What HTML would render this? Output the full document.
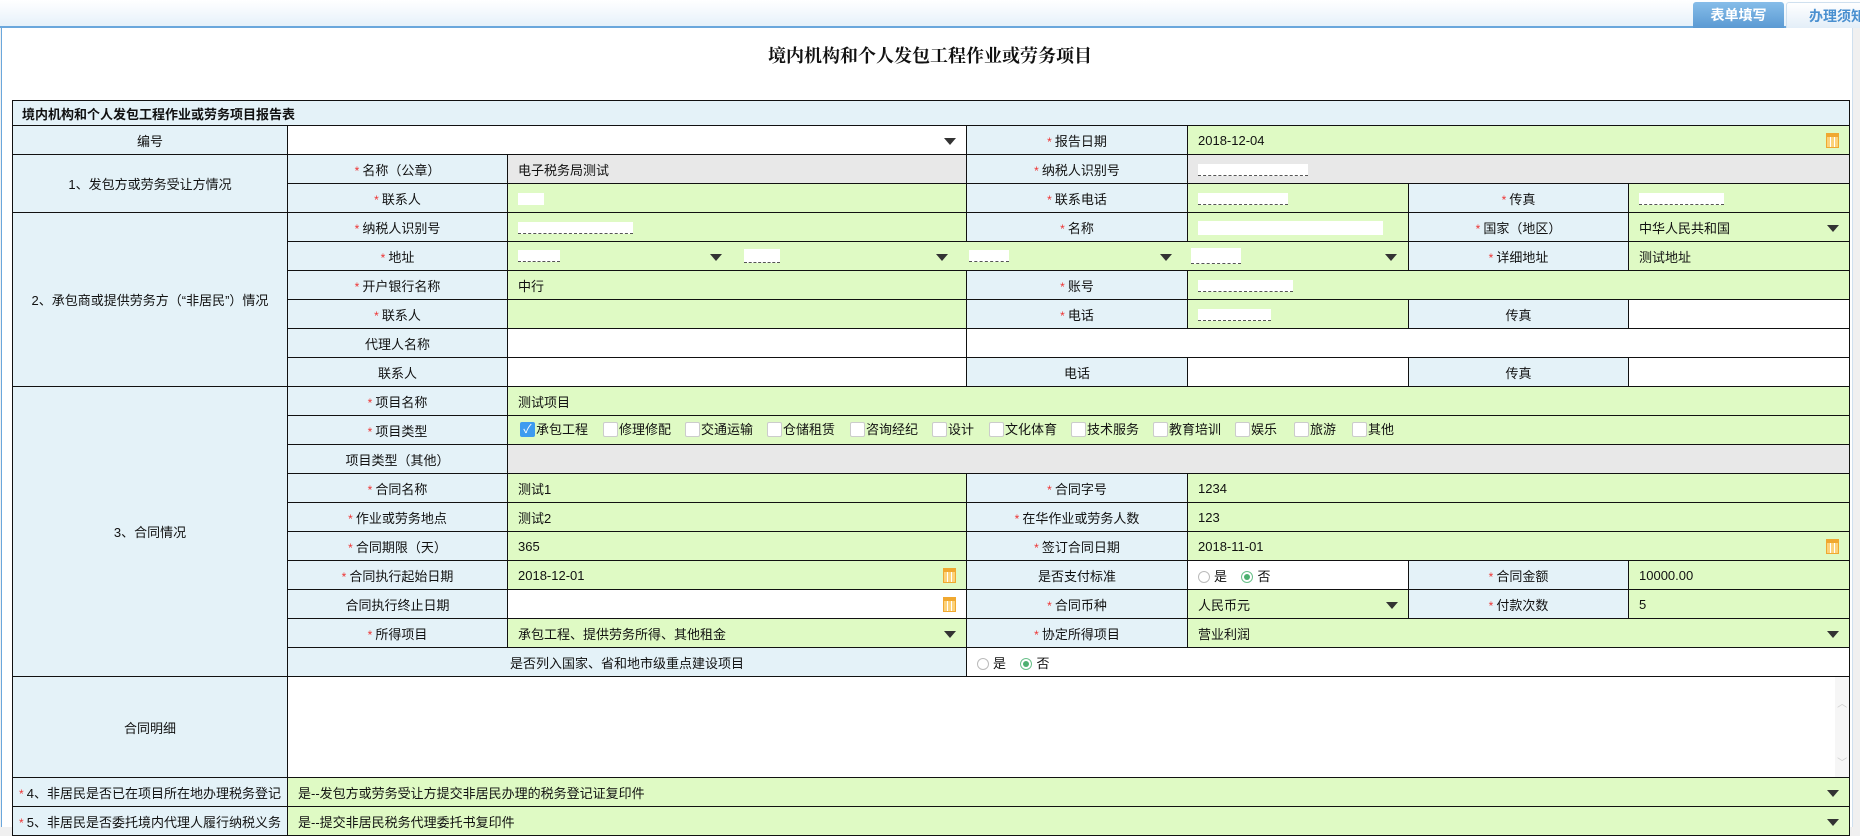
<!DOCTYPE html>
<html><head><meta charset="utf-8">
<style>
*{box-sizing:border-box;margin:0;padding:0}
body{width:1860px;height:830px;background:#f0f0f0;font-family:"Liberation Sans","Noto Sans CJK SC",sans-serif;font-size:13px;color:#111;position:relative;overflow:hidden}
.top{position:absolute;left:0;top:0;width:1860px;height:28px;background:linear-gradient(#fff,#e6f1fa);border-bottom:2px solid #6aa7dc}
.tab1{position:absolute;left:1693px;top:2px;width:91px;height:26px;background:linear-gradient(#86bde9,#5b9ad3);color:#fff;font-weight:bold;font-size:14px;text-align:center;line-height:26px;border-radius:3px 3px 0 0}
.tab2{position:absolute;left:1786px;top:2px;width:80px;height:26px;background:linear-gradient(#fff,#e3eef8);color:#4a90d0;font-weight:bold;font-size:14px;line-height:26px;padding-left:22px;border:1px solid #cfe0ef;border-bottom:none;border-radius:3px 3px 0 0;white-space:nowrap}
.main{position:absolute;left:1px;top:28px;width:1852px;height:799px;background:#fff;border-left:1px solid #6aa7dc;border-right:1px solid #cfe0ef}
.title{position:absolute;left:0;width:1860px;top:42px;text-align:center;font-family:"Liberation Serif","Noto Serif CJK SC",serif;font-weight:bold;font-size:18px}
table{position:absolute;left:12px;top:100px;border-collapse:collapse;table-layout:fixed;width:1837px}
td{border:1px solid #111;height:29px;padding:0 10px;white-space:nowrap;overflow:hidden;position:relative}
.l{background:#e4f2f8;text-align:center;padding:0}
.g{background:#dffac4}
.gr{background:#e8e8e8}
.w{background:#fff}
.s{color:#e33;font-size:12px;margin-right:3px}
.arr{position:absolute;right:10px;top:12px;width:0;height:0;border-left:6px solid transparent;border-right:6px solid transparent;border-top:7px solid #333}
.cal{position:absolute;right:10px;top:7px;width:13px;height:15px;border:1px solid #f0a830;background:repeating-linear-gradient(90deg,#fcd27a 0 3px,#fff 3px 4px);}
.cal:before{content:"";position:absolute;left:0;right:0;top:0;height:3px;background:#f0a830}
.red{display:inline-block;background:#fff;height:12px;vertical-align:middle;border-bottom:1px dashed #555}
.cb{position:absolute;top:6px;width:15px;height:15px;border:1px solid #ccc;background:#fff;border-radius:2px}
.cb.on{background:#3d9bf0;border-color:#3d9bf0;color:#fff;font-size:12px;line-height:13px;text-align:center}
.ct{position:absolute;top:6px;line-height:16px}
.rd{display:inline-block;width:12px;height:12px;border:1px solid #bbb;border-radius:50%;vertical-align:-2px;margin-right:4px;position:relative}
.rd.on{border-color:#6ac08a}
.rd.on:after{content:"";position:absolute;left:2px;top:2px;width:6px;height:6px;border-radius:50%;background:#4cb070}
.sb{position:absolute;right:0;top:0;width:14px;height:100%;background:#f6f6f6;color:#ccc;font-size:10px;text-align:center}
</style></head><body>
<div class="top"><div class="tab1">表单填写</div><div class="tab2">办理须知</div></div>
<div class="main"></div>
<div class="title">境内机构和个人发包工程作业或劳务项目</div>
<table>
<colgroup><col style="width:275px"><col style="width:220px"><col style="width:459px"><col style="width:221px"><col style="width:221px"><col style="width:220px"><col style="width:221px"></colgroup>
<tr><td colspan="7" class="l" style="height:25px;text-align:left;padding-left:9px;font-weight:bold">境内机构和个人发包工程作业或劳务项目报告表</td></tr>
<tr><td class="l">编号</td><td colspan="2" class="w"><span class="arr"></span></td><td class="l"><span class="s">*</span>报告日期</td><td colspan="3" class="g">2018-12-04<span class="cal"></span></td></tr>
<tr><td rowspan="2" class="l">1、发包方或劳务受让方情况</td><td class="l"><span class="s">*</span>名称（公章）</td><td class="gr">电子税务局测试</td><td class="l"><span class="s">*</span>纳税人识别号</td><td colspan="3" class="gr"><span class="red" style="width:110px"></span></td></tr>
<tr><td class="l"><span class="s">*</span>联系人</td><td class="g"><span class="red" style="width:26px;border:none"></span></td><td class="l"><span class="s">*</span>联系电话</td><td class="g"><span class="red" style="width:90px"></span></td><td class="l"><span class="s">*</span>传真</td><td class="g"><span class="red" style="width:85px"></span></td></tr>
<tr><td rowspan="6" class="l">2、承包商或提供劳务方（“非居民”）情况</td><td class="l"><span class="s">*</span>纳税人识别号</td><td class="g"><span class="red" style="width:115px"></span></td><td class="l"><span class="s">*</span>名称</td><td class="g"><span class="red" style="width:185px;border:none;height:14px"></span></td><td class="l"><span class="s">*</span>国家（地区）</td><td class="g">中华人民共和国<span class="arr"></span></td></tr>
<tr><td class="l"><span class="s">*</span>地址</td><td colspan="3" class="g" style="padding:0"><div style="position:relative;height:28px">
<span class="red" style="position:absolute;left:10px;top:8px;width:42px"></span><span class="arr" style="right:auto;left:202px"></span>
<span class="red" style="position:absolute;left:236px;top:7px;width:36px;height:14px"></span><span class="arr" style="right:auto;left:428px"></span>
<span class="red" style="position:absolute;left:461px;top:8px;width:40px"></span><span class="arr" style="right:auto;left:652px"></span>
<span class="red" style="position:absolute;left:683px;top:6px;width:50px;height:16px"></span><span class="arr" style="right:auto;left:877px"></span></div></td>
<td class="l"><span class="s">*</span>详细地址</td><td class="g">测试地址</td></tr>
<tr><td class="l"><span class="s">*</span>开户银行名称</td><td class="g">中行</td><td class="l"><span class="s">*</span>账号</td><td colspan="3" class="g"><span class="red" style="width:95px"></span></td></tr>
<tr><td class="l"><span class="s">*</span>联系人</td><td class="g"></td><td class="l"><span class="s">*</span>电话</td><td class="g"><span class="red" style="width:73px"></span></td><td class="l">传真</td><td class="w"></td></tr>
<tr><td class="l">代理人名称</td><td class="w"></td><td colspan="4" class="w"></td></tr>
<tr><td class="l">联系人</td><td class="w"></td><td class="l">电话</td><td class="w"></td><td class="l">传真</td><td class="w"></td></tr>
<tr><td rowspan="10" class="l">3、合同情况</td><td class="l"><span class="s">*</span>项目名称</td><td colspan="5" class="g">测试项目</td></tr>
<tr><td class="l"><span class="s">*</span>项目类型</td><td colspan="5" class="g" style="padding:0"><div style="position:relative;height:28px">
<span class="cb on" style="left:12px">✓</span><span class="ct" style="left:28px">承包工程</span>
<span class="cb" style="left:95px"></span><span class="ct" style="left:111px">修理修配</span>
<span class="cb" style="left:177px"></span><span class="ct" style="left:193px">交通运输</span>
<span class="cb" style="left:259px"></span><span class="ct" style="left:275px">仓储租赁</span>
<span class="cb" style="left:342px"></span><span class="ct" style="left:358px">咨询经纪</span>
<span class="cb" style="left:424px"></span><span class="ct" style="left:440px">设计</span>
<span class="cb" style="left:481px"></span><span class="ct" style="left:497px">文化体育</span>
<span class="cb" style="left:563px"></span><span class="ct" style="left:579px">技术服务</span>
<span class="cb" style="left:645px"></span><span class="ct" style="left:661px">教育培训</span>
<span class="cb" style="left:727px"></span><span class="ct" style="left:743px">娱乐</span>
<span class="cb" style="left:786px"></span><span class="ct" style="left:802px">旅游</span>
<span class="cb" style="left:844px"></span><span class="ct" style="left:860px">其他</span></div></td></tr>
<tr><td class="l">项目类型（其他）</td><td colspan="5" class="gr"></td></tr>
<tr><td class="l"><span class="s">*</span>合同名称</td><td class="g">测试1</td><td class="l"><span class="s">*</span>合同字号</td><td colspan="3" class="g">1234</td></tr>
<tr><td class="l"><span class="s">*</span>作业或劳务地点</td><td class="g">测试2</td><td class="l"><span class="s">*</span>在华作业或劳务人数</td><td colspan="3" class="g">123</td></tr>
<tr><td class="l"><span class="s">*</span>合同期限（天）</td><td class="g">365</td><td class="l"><span class="s">*</span>签订合同日期</td><td colspan="3" class="g">2018-11-01<span class="cal"></span></td></tr>
<tr><td class="l"><span class="s">*</span>合同执行起始日期</td><td class="g">2018-12-01<span class="cal"></span></td><td class="l">是否支付标准</td><td class="w"><span class="rd"></span>是 &nbsp; &nbsp;<span class="rd on"></span>否</td><td class="l"><span class="s">*</span>合同金额</td><td class="g">10000.00</td></tr>
<tr><td class="l">合同执行终止日期</td><td class="w"><span class="cal"></span></td><td class="l"><span class="s">*</span>合同币种</td><td class="g">人民币元<span class="arr"></span></td><td class="l"><span class="s">*</span>付款次数</td><td class="g">5</td></tr>
<tr><td class="l"><span class="s">*</span>所得项目</td><td class="g">承包工程、提供劳务所得、其他租金<span class="arr"></span></td><td class="l"><span class="s">*</span>协定所得项目</td><td colspan="3" class="g">营业利润<span class="arr"></span></td></tr>
<tr><td colspan="2" class="l">是否列入国家、省和地市级重点建设项目</td><td colspan="4" class="w"><span class="rd"></span>是 &nbsp; &nbsp;<span class="rd on"></span>否</td></tr>
<tr><td class="l" style="height:101px">合同明细</td><td colspan="6" class="w"><div class="sb"><div style="margin-top:18px">︿</div><div style="margin-top:44px">﹀</div></div></td></tr>
<tr><td class="l"><span class="s">*</span>4、非居民是否已在项目所在地办理税务登记</td><td colspan="6" class="g">是--发包方或劳务受让方提交非居民办理的税务登记证复印件<span class="arr"></span></td></tr>
<tr><td class="l"><span class="s">*</span>5、非居民是否委托境内代理人履行纳税义务</td><td colspan="6" class="g">是--提交非居民税务代理委托书复印件<span class="arr"></span></td></tr>
</table>
</body></html>
